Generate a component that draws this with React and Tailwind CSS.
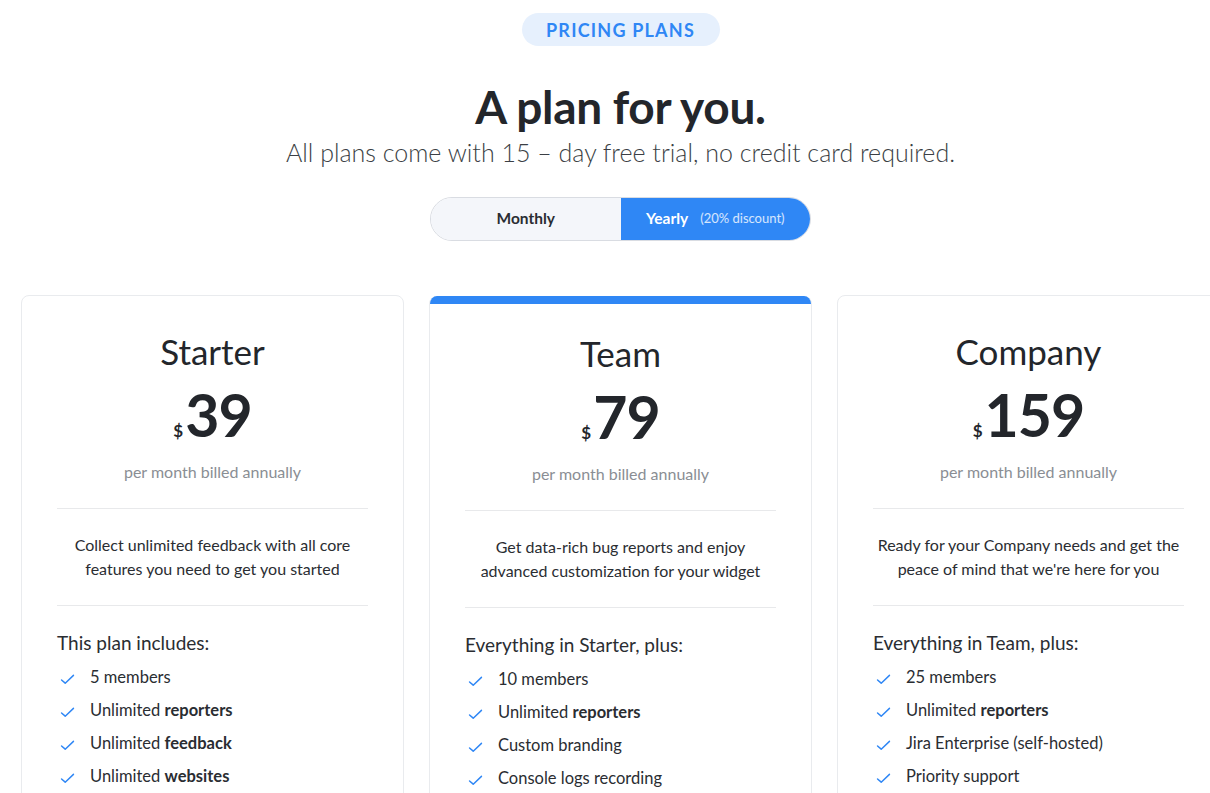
import React from 'react';

const plans = [
  {
    name: 'Starter',
    price: '39',
    blurb: ['Collect unlimited feedback with all core', 'features you need to get you started'],
    heading: 'This plan includes:',
    items: [['5 members'], ['Unlimited ', 'reporters'], ['Unlimited ', 'feedback'], ['Unlimited ', 'websites']],
  },
  {
    name: 'Team',
    price: '79',
    featured: true,
    blurb: ['Get data-rich bug reports and enjoy', 'advanced customization for your widget'],
    heading: 'Everything in Starter, plus:',
    items: [['10 members'], ['Unlimited ', 'reporters'], ['Custom branding'], ['Console logs recording']],
  },
  {
    name: 'Company',
    price: '159',
    blurb: ['Ready for your Company needs and get the', "peace of mind that we're here for you"],
    heading: 'Everything in Team, plus:',
    items: [['25 members'], ['Unlimited ', 'reporters'], ['Jira Enterprise (self-hosted)'], ['Priority support']],
  },
];

const jakarta = "font-['Lato',_'Open_Sans',_sans-serif]";
const body = "font-['Lato',_'Liberation_Sans',_sans-serif]";

function Check() {
  return (
    <svg viewBox="0 0 16 12" className="w-[15px] h-[11px] shrink-0" fill="none">
      <path d="M1.5 6.5 L5.5 10 L14.5 1.5" stroke="#2f87f5" strokeWidth="1.6" strokeLinecap="round" strokeLinejoin="round" />
    </svg>
  );
}

function PlanCard({ plan }) {
  return (
    <div
      className={
        'w-[383px] shrink-0 bg-white rounded-lg border border-[#e9ebee] overflow-hidden ' +
        (plan.featured ? 'mt-px border-t-0' : '')
      }
    >
      {plan.featured && <div className="h-2 bg-[#2f87f5]" />}
      <div className={'px-[35px] ' + (plan.featured ? 'pt-[29px]' : 'pt-[35px]')}>
        {/* name + price */}
        <div className={`${body} text-center text-[35px] leading-[40px] text-[#23262b]`}>{plan.name}</div>
        <div className="mt-[12px] flex justify-center items-baseline h-16 leading-[64px]">
          <span className={`${body} text-[17px] font-bold text-[#23262b] mr-[2px]`}>$</span>
          <span className={`${body} text-[59px] font-bold text-[#23262b] tracking-[-1px]`}>{plan.price}</span>
        </div>
        <div className={`${body} mt-[15px] text-center text-[16px] leading-5 text-[#8a8e94]`}>per month billed annually</div>

        <div className="mt-[26px] border-t border-[#e8e9eb]" />

        {/* blurb */}
        <div className={`${body} mt-[24px] text-center text-[16px] leading-6 text-[#2a2d32]`}>
          {plan.blurb.map((l) => (
            <div key={l}>{l}</div>
          ))}
        </div>

        <div className="mt-[24px] border-t border-[#e8e9eb]" />

        {/* features */}
        <div className={`${jakarta} mt-[23px] text-[19px] leading-7 text-[#2a2d32]`}>{plan.heading}</div>
        <ul className="mt-[8px] flex flex-col gap-[9px] pb-8">
          {plan.items.map((it, i) => (
            <li key={i} className={`${body} flex items-center gap-[15px] pl-[3px] text-[16.5px] leading-6 text-[#2a2d32]`}>
              <span className="mt-[4px]">
                <Check />
              </span>
              <span>
                {it[0]}
                {it[1] && <span className="font-bold">{it[1]}</span>}
              </span>
            </li>
          ))}
        </ul>
      </div>
    </div>
  );
}

export default function App() {
  return (
    <div className="w-[1210px] h-[793px] overflow-hidden bg-white">
      <div className="w-[1241px]">
        {/* HEADER */}
        <div className="flex flex-col items-center pt-[13px]">
          <div className={`${jakarta} h-[33px] w-[198px] rounded-full bg-[#e6f0fd] flex items-center justify-center text-[18px] font-bold tracking-[1.2px] text-[#2f87f5]`}>
            <span className="mt-[2px]">PRICING PLANS</span>
          </div>
          <h1 className={`${jakarta} mt-[35px] text-[46px] leading-[52px] font-bold text-[#23262b] tracking-[-0.3px]`}>
            A plan for you.
          </h1>
          <p className={`${jakarta} mt-[3px] text-[25px] leading-8 text-[#3b3f45] font-light`}>
            All plans come with 15 – day free trial, no credit card required.
          </p>

          {/* BILLING TOGGLE */}
          <div className="mt-[29px] flex w-[381px] h-[44px] rounded-full overflow-hidden border border-[#d9dce2]">
            <button className={`${body} w-1/2 bg-[#f4f6fa] text-[15.5px] font-bold text-[#2a2d32]`}>Monthly</button>
            <button className={`${body} w-1/2 bg-[#2f87f5] text-white flex items-center justify-center gap-3 -my-px -mr-px`}>
              <span className="text-[15.5px] font-bold">Yearly</span>
              <span className="text-[13px] text-white/80">(20% discount)</span>
            </button>
          </div>
        </div>

        {/* PLANS */}
        <div className="mt-[54px] px-[21px] flex items-start gap-[25px]">
          {plans.map((p) => (
            <PlanCard key={p.name} plan={p} />
          ))}
        </div>
      </div>
    </div>
  );
}
